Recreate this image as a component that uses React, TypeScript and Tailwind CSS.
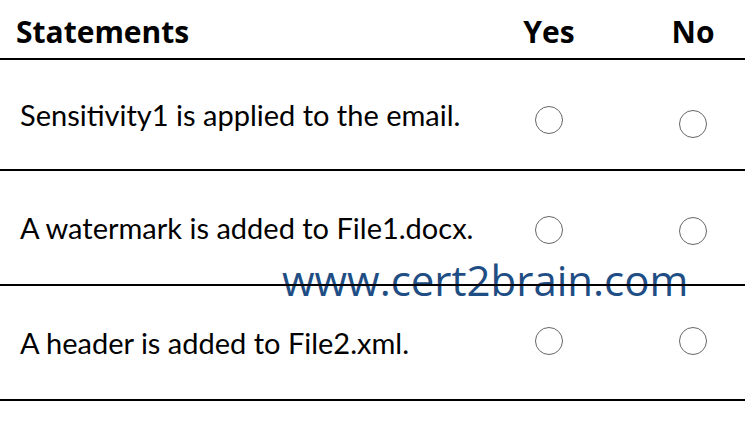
const rows = [
  { text: 'Sensitivity1 is applied to the email.', h: 'h-[111px]', yes: 'mt-[10px]', no: 'mt-[18px]' },
  { text: 'A watermark is added to File1.docx.', h: 'h-[115px]', yes: 'mt-[4px]', no: 'mt-[6px]' },
  { text: 'A header is added to File2.xml.', h: 'h-[115px]', yes: 'mt-[-4px]', no: 'mt-[-4px]' },
];

const Radio = ({ className }: { className: string }) => (
  <span className={`block w-[28px] h-[28px] rounded-full border border-[#666] ${className}`} />
);

export default function App() {
  return (
    <div className="relative w-[745px] h-[424px] bg-white overflow-hidden" style={{ fontFamily: 'Lato, "Open Sans", sans-serif' }}>
      {/* watermark */}
      <div className="absolute left-[282px] top-[259px] z-0 text-[42px] leading-none text-[#1f4e85] font-['Open_Sans',sans-serif]">
        www.cert2brain.com
      </div>

      <div className="relative z-10">
        <div className="grid grid-cols-[minmax(0,1fr)_80px_80px] gap-x-16 pr-3 h-[60px] items-center border-b-2 border-black text-black font-bold text-[30px] font-['Open_Sans',sans-serif]">
          <div className="pl-[16px] pt-[4px]">Statements</div>
          <div className="text-center pt-[4px]">Yes</div>
          <div className="text-center pt-[4px]">No</div>
        </div>

        {rows.map((r) => (
          <div
            key={r.text}
            className={`grid grid-cols-[minmax(0,1fr)_80px_80px] gap-x-16 pr-3 ${r.h} items-center border-b-2 border-black text-black text-[29px]`}
          >
            <div className="pl-[20px] whitespace-nowrap">{r.text}</div>
            <div className="flex justify-center">
              <Radio className={r.yes} />
            </div>
            <div className="flex justify-center">
              <Radio className={r.no} />
            </div>
          </div>
        ))}
      </div>
    </div>
  );
}
